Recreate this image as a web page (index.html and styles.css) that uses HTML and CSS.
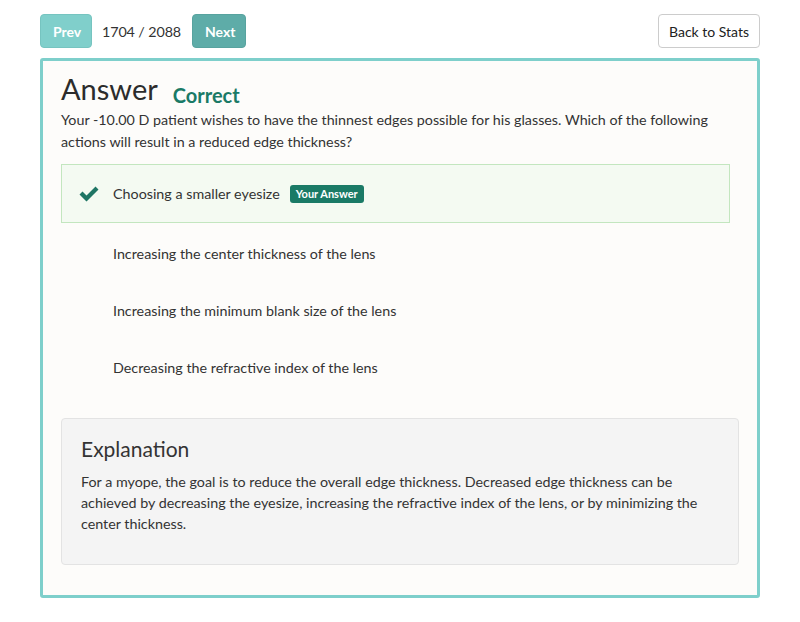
FILE: index.html
```html
<!DOCTYPE html>
<html>
<head>
<meta charset="utf-8">
<link rel="stylesheet" href="styles.css">
</head>
<body>
<div class="page">
  <div class="toolbar">
    <div class="nav">
      <button class="btn btn-prev">Prev</button>
      <span class="counter">1704 / 2088</span>
      <button class="btn btn-next">Next</button>
    </div>
    <button class="btn btn-back">Back to Stats</button>
  </div>
  <div class="card">
    <div class="title-row">
      <h1 class="title">Answer</h1>
      <span class="status">Correct</span>
    </div>
    <p class="question">Your -10.00 D patient wishes to have the thinnest edges possible for his glasses. Which of the following actions will result in a reduced edge thickness?</p>
    <ul class="options">
      <li class="option selected">
        <span class="icon"><svg width="22" height="18" viewBox="0 0 22 18"><path d="M1.5 9.5 L4.5 6.5 L8.5 10.5 L17.5 1.5 L20.5 4.5 L8.5 16.5 Z" fill="#1e7564"/></svg></span>
        <span class="label">Choosing a smaller eyesize</span>
        <span class="badge">Your Answer</span>
      </li>
      <li class="option"><span class="icon"></span><span class="label">Increasing the center thickness of the lens</span></li>
      <li class="option"><span class="icon"></span><span class="label">Increasing the minimum blank size of the lens</span></li>
      <li class="option"><span class="icon"></span><span class="label">Decreasing the refractive index of the lens</span></li>
    </ul>
    <div class="explanation">
      <h2 class="exp-title">Explanation</h2>
      <p class="exp-text">For a myope, the goal is to reduce the overall edge thickness. Decreased edge thickness can be achieved by decreasing the eyesize, increasing the refractive index of the lens, or by minimizing the center thickness.</p>
    </div>
  </div>
</div>
</body>
</html>
```
FILE: styles.css
```css
* { box-sizing: border-box; }
body {
  margin: 0;
  background: #ffffff;
  font-family: Lato, "Open Sans", sans-serif;
  color: #333333;
}
.page {
  width: 720px;
  margin: 0 0 0 40px;
  padding-top: 14px;
}
.toolbar {
  display: flex;
  justify-content: space-between;
  align-items: center;
  height: 34px;
}
.nav {
  display: flex;
  align-items: center;
  gap: 10px;
}
.btn {
  height: 34px;
  border-radius: 4px;
  font-family: Lato, sans-serif;
  font-size: 14px;
  border: 1px solid transparent;
  padding: 0 12px;
  cursor: pointer;
}
.btn-prev {
  background: #80cfcb;
  border-color: #76c4c0;
  color: #ffffff;
  font-weight: bold;
  width: 52px;
}
.btn-next {
  background: #5eaca8;
  border-color: #58a39f;
  color: #ffffff;
  font-weight: bold;
  width: 54px;
  margin-left: 1px;
}
.counter {
  font-size: 14.3px;
  color: #333;
  letter-spacing: -0.1px;
}
.btn-back {
  background: #ffffff;
  border-color: #cccccc;
  color: #222;
  width: 102px;
  padding: 0;
}
.card {
  margin-top: 10px;
  border: 3px solid #7ecfcb;
  border-radius: 3px;
  background: #fdfcfa;
  padding: 10px 18px 33px 18px;
  height: 540px;
}
.title-row {
  display: flex;
  align-items: baseline;
  gap: 15px;
}
.title {
  margin: 0;
  font-size: 29px;
  font-weight: normal;
  color: #2c2c2c;
  line-height: 36px;
}
.status {
  font-size: 20px;
  font-weight: bold;
  color: #1a7a66;
  position: relative;
  top: 3px;
}
.question {
  margin: 2px 0 0 0;
  font-size: 14.3px;
  line-height: 22px;
  color: #333;
}
.options {
  list-style: none;
  margin: 11px 9px 0 0;
  padding: 0;
}
.option {
  display: flex;
  align-items: center;
  height: 57px;
  font-size: 14.3px;
  color: #333;
}
.option.selected {
  height: 59px;
  margin-bottom: 2px;
  background: #f4faf2;
  border: 1px solid #c3e6bf;
}
.icon {
  width: 51px;
  padding-left: 17px;
  display: flex;
  align-items: center;
}
.selected .icon { padding-left: 16px; width: 51px; }
.label { margin-left: 0; }
.option:not(.selected) .label { margin-left: 1px; }
.badge {
  margin-left: 10px;
  background: #1a7a66;
  color: #ffffff;
  font-size: 11px;
  font-weight: bold;
  padding: 2px 6px;
  border-radius: 3px;
  line-height: 14px;
}
.explanation {
  margin-top: 22px;
  background: #f4f4f4;
  border: 1px solid #e3e3e3;
  border-radius: 4px;
  padding: 17px 19px 20px 19px;
  height: 147px;
}
.exp-title {
  margin: 0;
  font-size: 21px;
  font-weight: normal;
  color: #333;
  line-height: 26px;
}
.exp-text {
  margin: 9px 0 0 0;
  font-size: 14.3px;
  line-height: 21px;
  color: #333;
}
```
